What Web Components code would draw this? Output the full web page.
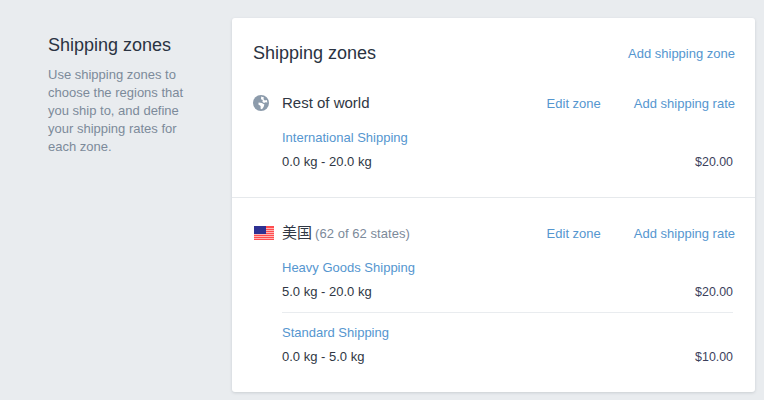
<!DOCTYPE html>
<html>
<head>
<meta charset="utf-8">
<title>Shipping zones</title>
<style>
  html, body { margin: 0; height: 400px; overflow: hidden; background: #e9ecef; }
  body { font-family: "Liberation Sans", "Noto Sans CJK SC", sans-serif; }
</style>
</head>
<body>
<settings-section>
  <span slot="title">Shipping zones</span>
  <span slot="description">Use shipping zones to choose the regions that you ship to, and define your shipping rates for each zone.</span>
  <zone-card>
    <zone-group name="Rest of world" icon="globe">
      <rate-row name="International Shipping" range="0.0 kg - 20.0 kg" price="$20.00"></rate-row>
    </zone-group>
    <zone-group name="美国" note="(62 of 62 states)" icon="flag">
      <rate-row name="Heavy Goods Shipping" range="5.0 kg - 20.0 kg" price="$20.00"></rate-row>
      <rate-row name="Standard Shipping" range="0.0 kg - 5.0 kg" price="$10.00"></rate-row>
    </zone-group>
  </zone-card>
</settings-section>

<script>
const linkColor = "#5596cf";

class SettingsSection extends HTMLElement {
  constructor() {
    super();
    this.attachShadow({ mode: "open" }).innerHTML = `
      <style>
        :host { display: flex; padding: 18px 9px 0 48px; }
        .side { width: 184px; flex: none; padding-top: 17px; }
        .title { font-size: 18px; line-height: 20px; color: #2a3342; }
        .desc { margin-top: 11px; width: 140px; font-size: 13px; line-height: 18px; color: #7c8a9a; }
        .main { flex: 1; min-width: 0; }
      </style>
      <div class="side">
        <div class="title"><slot name="title"></slot></div>
        <div class="desc"><slot name="description"></slot></div>
      </div>
      <div class="main"><slot></slot></div>`;
  }
}

class ZoneCard extends HTMLElement {
  constructor() {
    super();
    this.attachShadow({ mode: "open" }).innerHTML = `
      <style>
        :host { display: block; height: 374px; box-sizing: border-box; background: #fff; border-radius: 3px;
                box-shadow: 0 1px 3px rgba(60, 70, 85, .18); }
        header { display: flex; justify-content: space-between; align-items: center; padding: 25px 20px 0 21px; height: 20px; }
        h2 { margin: 0; font-weight: 400; font-size: 18px; line-height: 20px; color: #2a3342; }
        a { font-size: 13px; color: ${linkColor}; }
      </style>
      <header><h2>Shipping zones</h2><a>Add shipping zone</a></header>
      <slot></slot>`;
  }
}

const icons = {
  globe: `<svg width="16" height="16" viewBox="0 0 16 16">
    <circle cx="8" cy="8" r="8" fill="#8c9bab"/>
    <path fill="#fff" d="M8.2 1.6 11 2.4 10.4 4 11.8 5.4 13.8 5 14.4 7.6 12.6 7.2 11 8 9.4 6.8 9.8 5 8 4.2ZM5.6 7.4 8.8 8 11.4 9.4 10.6 12 9 14.2 7.6 13.8 7.6 11 5.4 9.6Z"/>
  </svg>`,
  flag: `<svg width="20" height="14" viewBox="0 0 20 14">
    <rect width="20" height="14" fill="#ff4d4f"/>
    <g fill="#ffb3b3"><rect y="2" width="20" height="1"/><rect y="4" width="20" height="1"/><rect y="6" width="20" height="1"/><rect y="8" width="20" height="1"/><rect y="10" width="20" height="1"/><rect y="12" width="20" height="1"/></g>
    <rect width="12" height="8" fill="#2e3192"/>
  </svg>`
};

class ZoneGroup extends HTMLElement {
  constructor() {
    super();
    this.attachShadow({ mode: "open" });
  }
  connectedCallback() {
    const note = this.getAttribute("note");
    this.shadowRoot.innerHTML = `
      <style>
        :host { display: block; padding: 30px 20px 15px 21px; }
        :host(:last-of-type) { padding-top: 25px; padding-bottom: 0; border-top: 1px solid #e6e9ec; }
        .head { display: flex; align-items: center; height: 20px; font-size: 15px; color: #2f3744; }
        .icon { width: 29px; flex: none; display: flex; align-items: center; }
        .icon svg[width="20"] { margin-left: 1px; }
        .note { color: #7c8a9a; font-size: 13px; margin-left: 3px; letter-spacing: .06px; }
        .name { flex: 1; line-height: 18px; }
        a { font-size: 13px; color: ${linkColor}; }
        a + a { margin-left: 33px; }
        .rates { padding: 16px 2px 0 29px; }
      </style>
      <div class="head">
        <span class="icon">${icons[this.getAttribute("icon")]}</span>
        <span class="name">${this.getAttribute("name")}${note ? `<span class="note">${note}</span>` : ""}</span>
        <a>Edit zone</a><a>Add shipping rate</a>
      </div>
      <div class="rates"><slot></slot></div>`;
  }
}

class RateRow extends HTMLElement {
  constructor() {
    super();
    this.attachShadow({ mode: "open" });
  }
  connectedCallback() {
    this.shadowRoot.innerHTML = `
      <style>
        :host { display: block; font-size: 13px; color: #2f3744; padding-bottom: 11px; border-bottom: 1px solid #e9ecef; margin-bottom: 11px; }
        :host(:last-child) { border-bottom: 0; margin-bottom: 0; }
        a { display: block; font-size: 13px; line-height: 18px; color: ${linkColor}; }
        .line { display: flex; justify-content: space-between; align-items: baseline; margin-top: 6px; line-height: 18px; }
        .price { font-size: 12.4px; color: #3c3f5c; }
      </style>
      <a>${this.getAttribute("name")}</a>
      <div class="line"><span>${this.getAttribute("range")}</span><span class="price">${this.getAttribute("price")}</span></div>`;
  }
}

customElements.define("settings-section", SettingsSection);
customElements.define("zone-card", ZoneCard);
customElements.define("zone-group", ZoneGroup);
customElements.define("rate-row", RateRow);
</script>
</body>
</html>
